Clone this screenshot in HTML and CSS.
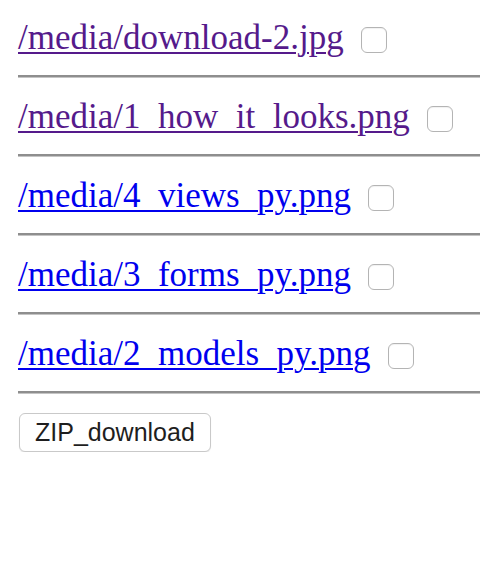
FILE: index.html
```html
<!DOCTYPE html>
<html>
<head>
<meta charset="utf-8">
<link rel="stylesheet" href="styles.css">
</head>
<body>
<div class="page">
  <div class="row"><a class="link visited" href="#">/media/download-2.jpg</a><span class="check"></span></div>
  <hr class="rule">
  <div class="row"><a class="link visited" href="#">/media/1_how_it_looks.png</a><span class="check"></span></div>
  <hr class="rule">
  <div class="row"><a class="link" href="#">/media/4_views_py.png</a><span class="check"></span></div>
  <hr class="rule">
  <div class="row"><a class="link" href="#">/media/3_forms_py.png</a><span class="check"></span></div>
  <hr class="rule">
  <div class="row"><a class="link" href="#">/media/2_models_py.png</a><span class="check"></span></div>
  <hr class="rule">
  <button class="zip" type="button">ZIP_download</button>
</div>
</body>
</html>
```

FILE: styles.css
```css
html, body {
  margin: 0;
  padding: 0;
  background: #fff;
}

.page {
  padding: 18px 0 0 18px;
  font-family: "Liberation Serif", "Times New Roman", serif;
  font-size: 35px;
}

.row {
  display: flex;
  align-items: flex-start;
  gap: 17px;
  height: 40px;
}

.link {
  line-height: 40px;
  color: #0000ee;
  text-decoration: underline;
  text-decoration-thickness: 2px;
  text-underline-offset: 3px;
  white-space: nowrap;
}

.link.visited {
  color: #551a8b;
}

.check {
  flex: none;
  width: 24px;
  height: 24px;
  margin-top: 9px;
  border: 1px solid #b4b4b4;
  border-radius: 6px;
  background: #fff;
  box-shadow: inset 0 1px 1px rgba(0, 0, 0, 0.06);
}

.rule {
  margin: 17px 0 19px;
  height: 0;
  border: 0;
  border-top: 2px solid #8e8e8e;
  border-bottom: 1px solid #c4c4c4;
}

.zip {
  display: block;
  margin-top: 17px;
  margin-left: 1px;
  height: 39px;
  padding: 0 15px;
  font-family: "Liberation Sans", Arial, sans-serif;
  font-size: 25px;
  color: #1e1e1e;
  background: #fff;
  border: 1px solid #c9c9c9;
  border-radius: 6px;
  box-shadow: 0 1px 1px rgba(0, 0, 0, 0.08);
}
```
